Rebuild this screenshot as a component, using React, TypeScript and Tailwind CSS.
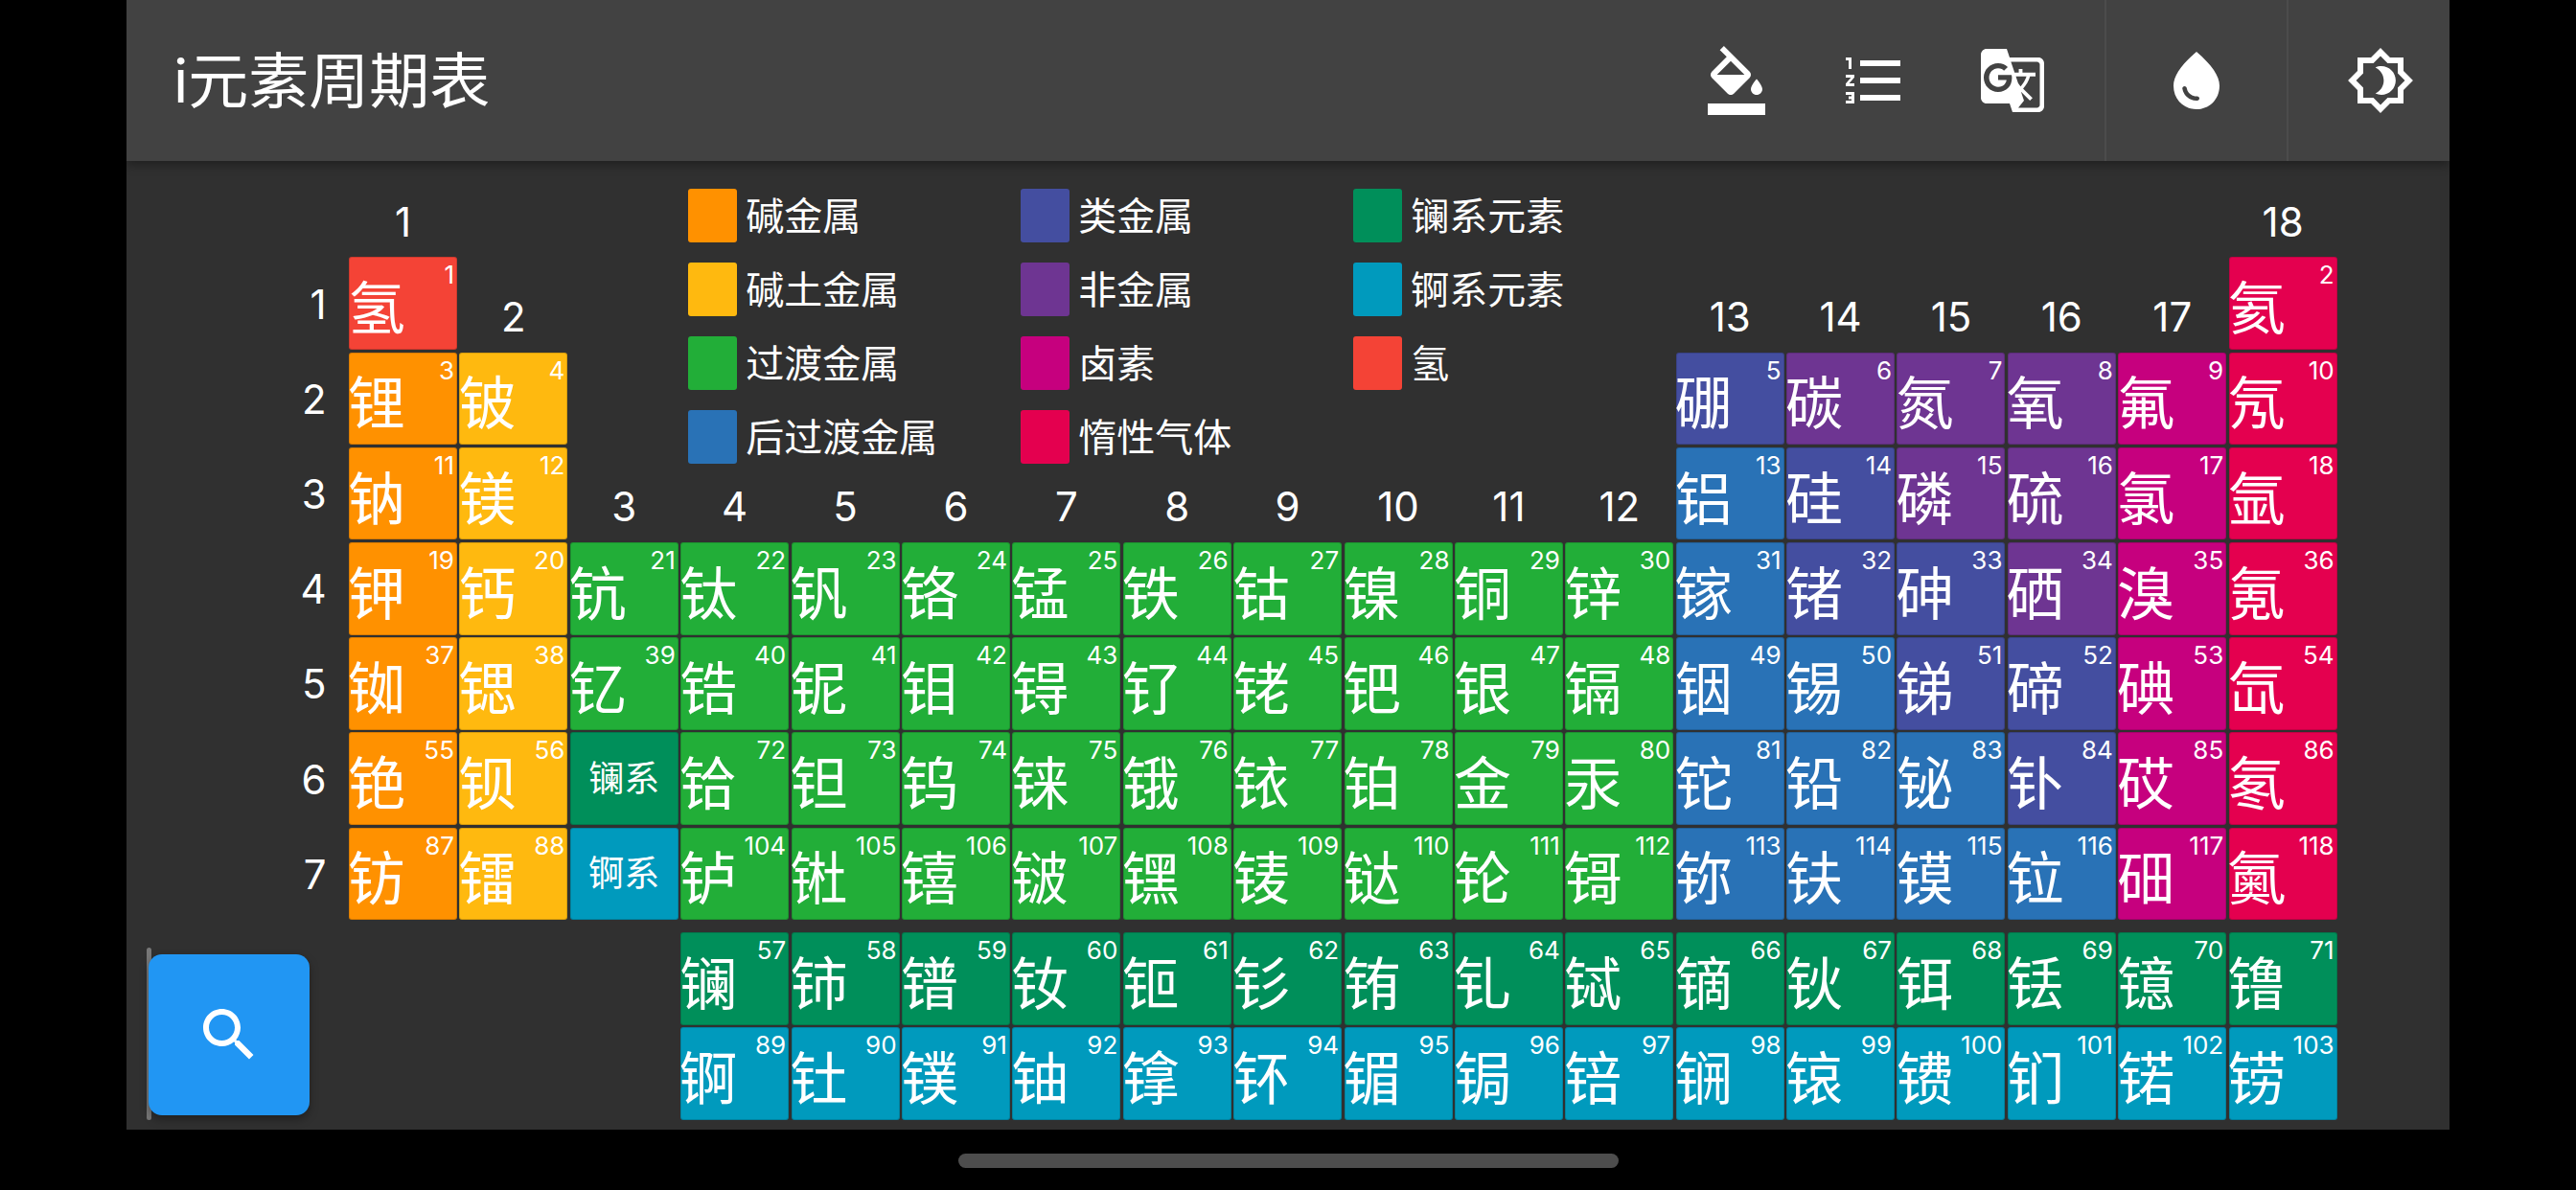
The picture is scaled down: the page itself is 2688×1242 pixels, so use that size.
import { ReactNode } from 'react';

const FONT = "font-['Inter','Noto_Sans_CJK_SC',sans-serif]";

const colors: Record<string, string> = {
  alkali: 'bg-[#ff9100]',
  earth: 'bg-[#ffb90f]',
  transition: 'bg-[#22ae38]',
  post: 'bg-[#2972b6]',
  metalloid: 'bg-[#444ea0]',
  nonmetal: 'bg-[#6e3592]',
  halogen: 'bg-[#c6007e]',
  noble: 'bg-[#e4004f]',
  lanthanide: 'bg-[#008f5a]',
  actinide: 'bg-[#009abd]',
  hydrogen: 'bg-[#f44336]',
};

const legend: [string, string][] = [
  ['alkali', '碱金属'],
  ['earth', '碱土金属'],
  ['transition', '过渡金属'],
  ['post', '后过渡金属'],
  ['metalloid', '类金属'],
  ['nonmetal', '非金属'],
  ['halogen', '卤素'],
  ['noble', '惰性气体'],
  ['lanthanide', '镧系元素'],
  ['actinide', '锕系元素'],
  ['hydrogen', '氢'],
];

type El = { n: number; s: string; c: string; col: number; row: number };

// col is 1-18, row is the grid row (period + 1), the f-block sits in rows 10 and 11
const elements: El[] = [];

function addRow(row: number, startCol: number, startNum: number, chars: string, kinds: string[]) {
  Array.from(chars).forEach((s, i) => {
    elements.push({ n: startNum + i, s, c: kinds[i] ?? kinds[kinds.length - 1], col: startCol + i, row });
  });
}

const tm = 'transition';
addRow(2, 1, 1, '氢', ['hydrogen']);
addRow(2, 18, 2, '氦', ['noble']);
addRow(3, 1, 3, '锂铍', ['alkali', 'earth']);
addRow(3, 13, 5, '硼碳氮氧氟氖', ['metalloid', 'nonmetal', 'nonmetal', 'nonmetal', 'halogen', 'noble']);
addRow(4, 1, 11, '钠镁', ['alkali', 'earth']);
addRow(4, 13, 13, '铝硅磷硫氯氩', ['post', 'metalloid', 'nonmetal', 'nonmetal', 'halogen', 'noble']);
addRow(5, 1, 19, '钾钙钪钛钒铬锰铁钴镍铜锌镓锗砷硒溴氪', [
  'alkali', 'earth', tm, tm, tm, tm, tm, tm, tm, tm, tm, tm, 'post', 'metalloid', 'metalloid', 'nonmetal', 'halogen', 'noble',
]);
addRow(6, 1, 37, '铷锶钇锆铌钼锝钌铑钯银镉铟锡锑碲碘氙', [
  'alkali', 'earth', tm, tm, tm, tm, tm, tm, tm, tm, tm, tm, 'post', 'post', 'metalloid', 'metalloid', 'halogen', 'noble',
]);
addRow(7, 1, 55, '铯钡', ['alkali', 'earth']);
addRow(7, 4, 72, '铪钽钨铼锇铱铂金汞铊铅铋钋砹氡', [
  tm, tm, tm, tm, tm, tm, tm, tm, tm, 'post', 'post', 'post', 'metalloid', 'halogen', 'noble',
]);
addRow(8, 1, 87, '钫镭', ['alkali', 'earth']);
addRow(8, 4, 104, '𬬻𬭊𬭳𬭛𬭶鿏𫟼𬬭鿔鿭𫓧镆𫟷鿬鿫', [
  tm, tm, tm, tm, tm, tm, tm, tm, tm, 'post', 'post', 'post', 'post', 'halogen', 'noble',
]);
addRow(10, 4, 57, '镧铈镨钕钷钐铕钆铽镝钬铒铥镱镥', ['lanthanide']);
addRow(11, 4, 89, '锕钍镤铀镎钚镅锔锫锎锿镄钔锘铹', ['actinide']);

const groups = [
  { g: 1, col: 1, row: 1 },
  { g: 2, col: 2, row: 2 },
  ...[3, 4, 5, 6, 7, 8, 9, 10, 11, 12].map((g) => ({ g, col: g, row: 4 })),
  ...[13, 14, 15, 16, 17].map((g) => ({ g, col: g, row: 2 })),
  { g: 18, col: 18, row: 1 },
];

function Icon({ d }: { d: string }) {
  return (
    <svg viewBox="0 0 24 24" className="w-[72px] h-[72px] fill-white">
      <path d={d} />
    </svg>
  );
}

function Cell({ style, c, children }: { style: React.CSSProperties; c: string; children: ReactNode }) {
  return (
    <div style={style} className={`relative flex items-center rounded-[3px] border border-black/15 ${colors[c]}`}>
      {children}
    </div>
  );
}

export default function App() {
  return (
    <div className={`w-[2688px] h-[1242px] bg-black flex flex-col px-[132px] text-white overflow-hidden ${FONT}`}>
      <header className="relative z-10 h-[168px] shrink-0 bg-[#424242] flex items-center shadow-[0_4px_10px_rgba(0,0,0,0.35)]">
        <h1 className="pl-[49px] text-[63px] leading-none font-normal">i元素周期表</h1>
        <div className="ml-auto h-full flex items-center">
          <button className="w-[144px] flex justify-center">
            <Icon d="M16.56 8.94L7.62 0 6.21 1.41l2.38 2.38-5.15 5.15c-.59.59-.59 1.54 0 2.12l5.5 5.5c.29.29.68.44 1.06.44s.77-.15 1.06-.44l5.5-5.5c.59-.58.59-1.53 0-2.12zM5.21 10L10 5.21 14.79 10H5.21zM19 11.5s-2 2.17-2 3.5c0 1.1.9 2 2 2s2-.9 2-2c0-1.33-2-3.5-2-3.5zM2 20h20v4H2v-4z" />
          </button>
          <button className="w-[144px] flex justify-center">
            <Icon d="M2 17h2v.5H3v1h1v.5H2v1h3v-4H2v1zm1-9h1V4H2v1h1v3zm-1 3h1.8L2 13.1v.9h3v-1H3.2L5 10.9V10H2v1zm5-6v2h14V5H7zm0 14h14v-2H7v2zm0-6h14v-2H7v2z" />
          </button>
          <button className="w-[144px] mr-[24px] flex justify-center">
            <Icon d="M21 4H11l-1-3H3c-1.1 0-2 .9-2 2v15c0 1.1.9 2 2 2h8l1 3h9c1.1 0 2-.9 2-2V6c0-1.1-.9-2-2-2zM7 16c-2.76 0-5-2.24-5-5s2.24-5 5-5c1.35 0 2.48.5 3.35 1.3L9.03 8.57c-.38-.36-1.04-.78-2.03-.78-1.74 0-3.15 1.44-3.15 3.21S5.26 14.21 7 14.21c2.01 0 2.84-1.44 2.92-2.41H7v-1.71h4.68c.07.31.12.61.12 1.02C11.8 13.97 9.89 16 7 16zm6.17-5.42h3.7c-.43 1.25-1.11 2.43-2.05 3.47-.31-.35-.6-.72-.86-1.1l-.79-2.37zm8.33 9.92c0 .55-.45 1-1 1H14l2-2.5-1.04-3.1 3.1 3.1.92-.92-3.3-3.25.02-.02c1.13-1.25 1.93-2.69 2.4-4.22H20v-1.3h-4.53V8h-1.29v1.29h-1.44L11.46 5.5h9.04c.55 0 1 .45 1 1v14z" />
          </button>
          <button className="w-[192px] h-full flex items-center justify-center border-x-2 border-[#4c4c4c]">
            <Icon d="M12 2c-5.33 4.55-8 8.48-8 11.8 0 4.98 3.8 8.2 8 8.2s8-3.22 8-8.2C20 10.48 17.33 6.55 12 2zM7.83 14c.37 0 .67.26.74.62.41 2.22 2.28 2.98 3.64 2.87.43-.02.79.32.79.75 0 .4-.32.73-.72.75-2.13.13-4.62-1.09-5.19-4.12-.08-.45.28-.87.74-.87z" />
          </button>
          <button className="w-[168px] pl-[60px] flex">
            <Icon d="M20 8.69V4h-4.69L12 .69 8.69 4H4v4.69L.69 12 4 15.31V20h4.69L12 23.31 15.31 20H20v-4.69L23.31 12 20 8.69zm-2 5.79V18h-3.52L12 20.48 9.52 18H6v-3.52L3.52 12 6 9.52V6h3.52L12 3.52 14.48 6H18v3.52L20.48 12 18 14.48zM12.29 7c-.74 0-1.45.17-2.08.46 1.72.79 2.92 2.53 2.92 4.54s-1.2 3.75-2.92 4.54c.63.29 1.34.46 2.08.46 2.76 0 5-2.24 5-5s-2.24-5-5-5z" />
          </button>
        </div>
      </header>

      <main className="relative h-[1011px] shrink-0 bg-[#303030] pl-[116.6px]">
        <div className="grid grid-cols-[repeat(19,113px)] grid-rows-[repeat(8,96.6px)_8px_repeat(2,96.6px)] gap-x-[2.4px] gap-y-[2.6px] pt-[1.2px]">
          {[1, 2, 3, 4, 5, 6, 7].map((p) => (
            <div
              key={p}
              style={{ gridColumn: 1, gridRow: p + 1 }}
              className="flex items-center justify-end pr-[21px] pt-[2px] text-[42px] leading-none"
            >
              {p}
            </div>
          ))}

          {groups.map(({ g, col, row }) => (
            <div
              key={g}
              style={{ gridColumn: col + 1, gridRow: row }}
              className="flex items-end justify-center pb-[13px] text-[42px] leading-none"
            >
              {g}
            </div>
          ))}

          <div
            style={{ gridColumn: '5 / 15', gridRow: '1 / 5' }}
            className="pl-[8px] pt-[28px] grid grid-flow-col grid-cols-[repeat(3,347px)] grid-rows-[repeat(4,56px)] gap-y-[21px]"
          >
            {legend.map(([c, label]) => (
              <div key={c} className="flex items-center gap-[9px]">
                <span className={`w-[51px] h-[56px] rounded-[3px] ${colors[c]}`} />
                <span className="pt-[2px] text-[40px] leading-none">{label}</span>
              </div>
            ))}
          </div>

          {elements.map((e) => (
            <Cell key={e.n} c={e.c} style={{ gridColumn: e.col + 1, gridRow: e.row }}>
              <span className="absolute top-[5px] right-[2px] text-[26px] leading-none">{e.n}</span>
              <span className="-ml-[2px] pt-[11px] text-[60px] leading-none">{e.s}</span>
            </Cell>
          ))}

          <Cell c="lanthanide" style={{ gridColumn: 4, gridRow: 7 }}>
            <span className="w-full text-center text-[37px] leading-none">镧系</span>
          </Cell>
          <Cell c="actinide" style={{ gridColumn: 4, gridRow: 8 }}>
            <span className="w-full text-center text-[37px] leading-none">锕系</span>
          </Cell>
        </div>

        {/* floating search button with its grey drag handle */}
        <div className="absolute left-[21px] top-[821px] w-[5px] h-[180px] rounded-full bg-[#777777]" />
        <button className="absolute left-[23px] top-[828px] w-[168px] h-[168px] rounded-[14px] bg-[#2196f3] shadow-[0_4px_10px_rgba(0,0,0,0.35)] flex items-center justify-center">
          <Icon d="M15.5 14h-.79l-.28-.27C15.41 12.59 16 11.11 16 9.5 16 5.91 13.09 3 9.5 3S3 5.91 3 9.5 5.91 16 9.5 16c1.61 0 3.09-.59 4.23-1.57l.27.28v.79l5 4.99L20.49 19l-4.99-5zm-6 0C7.01 14 5 11.99 5 9.5S7.01 5 9.5 5 14 7.01 14 9.5 11.99 14 9.5 14z" />
        </button>
      </main>

      <div className="flex-1 flex items-center justify-center pt-[1px]">
        <div className="w-[689px] h-[15px] rounded-full bg-[#4d4d4d]" />
      </div>
    </div>
  );
}
